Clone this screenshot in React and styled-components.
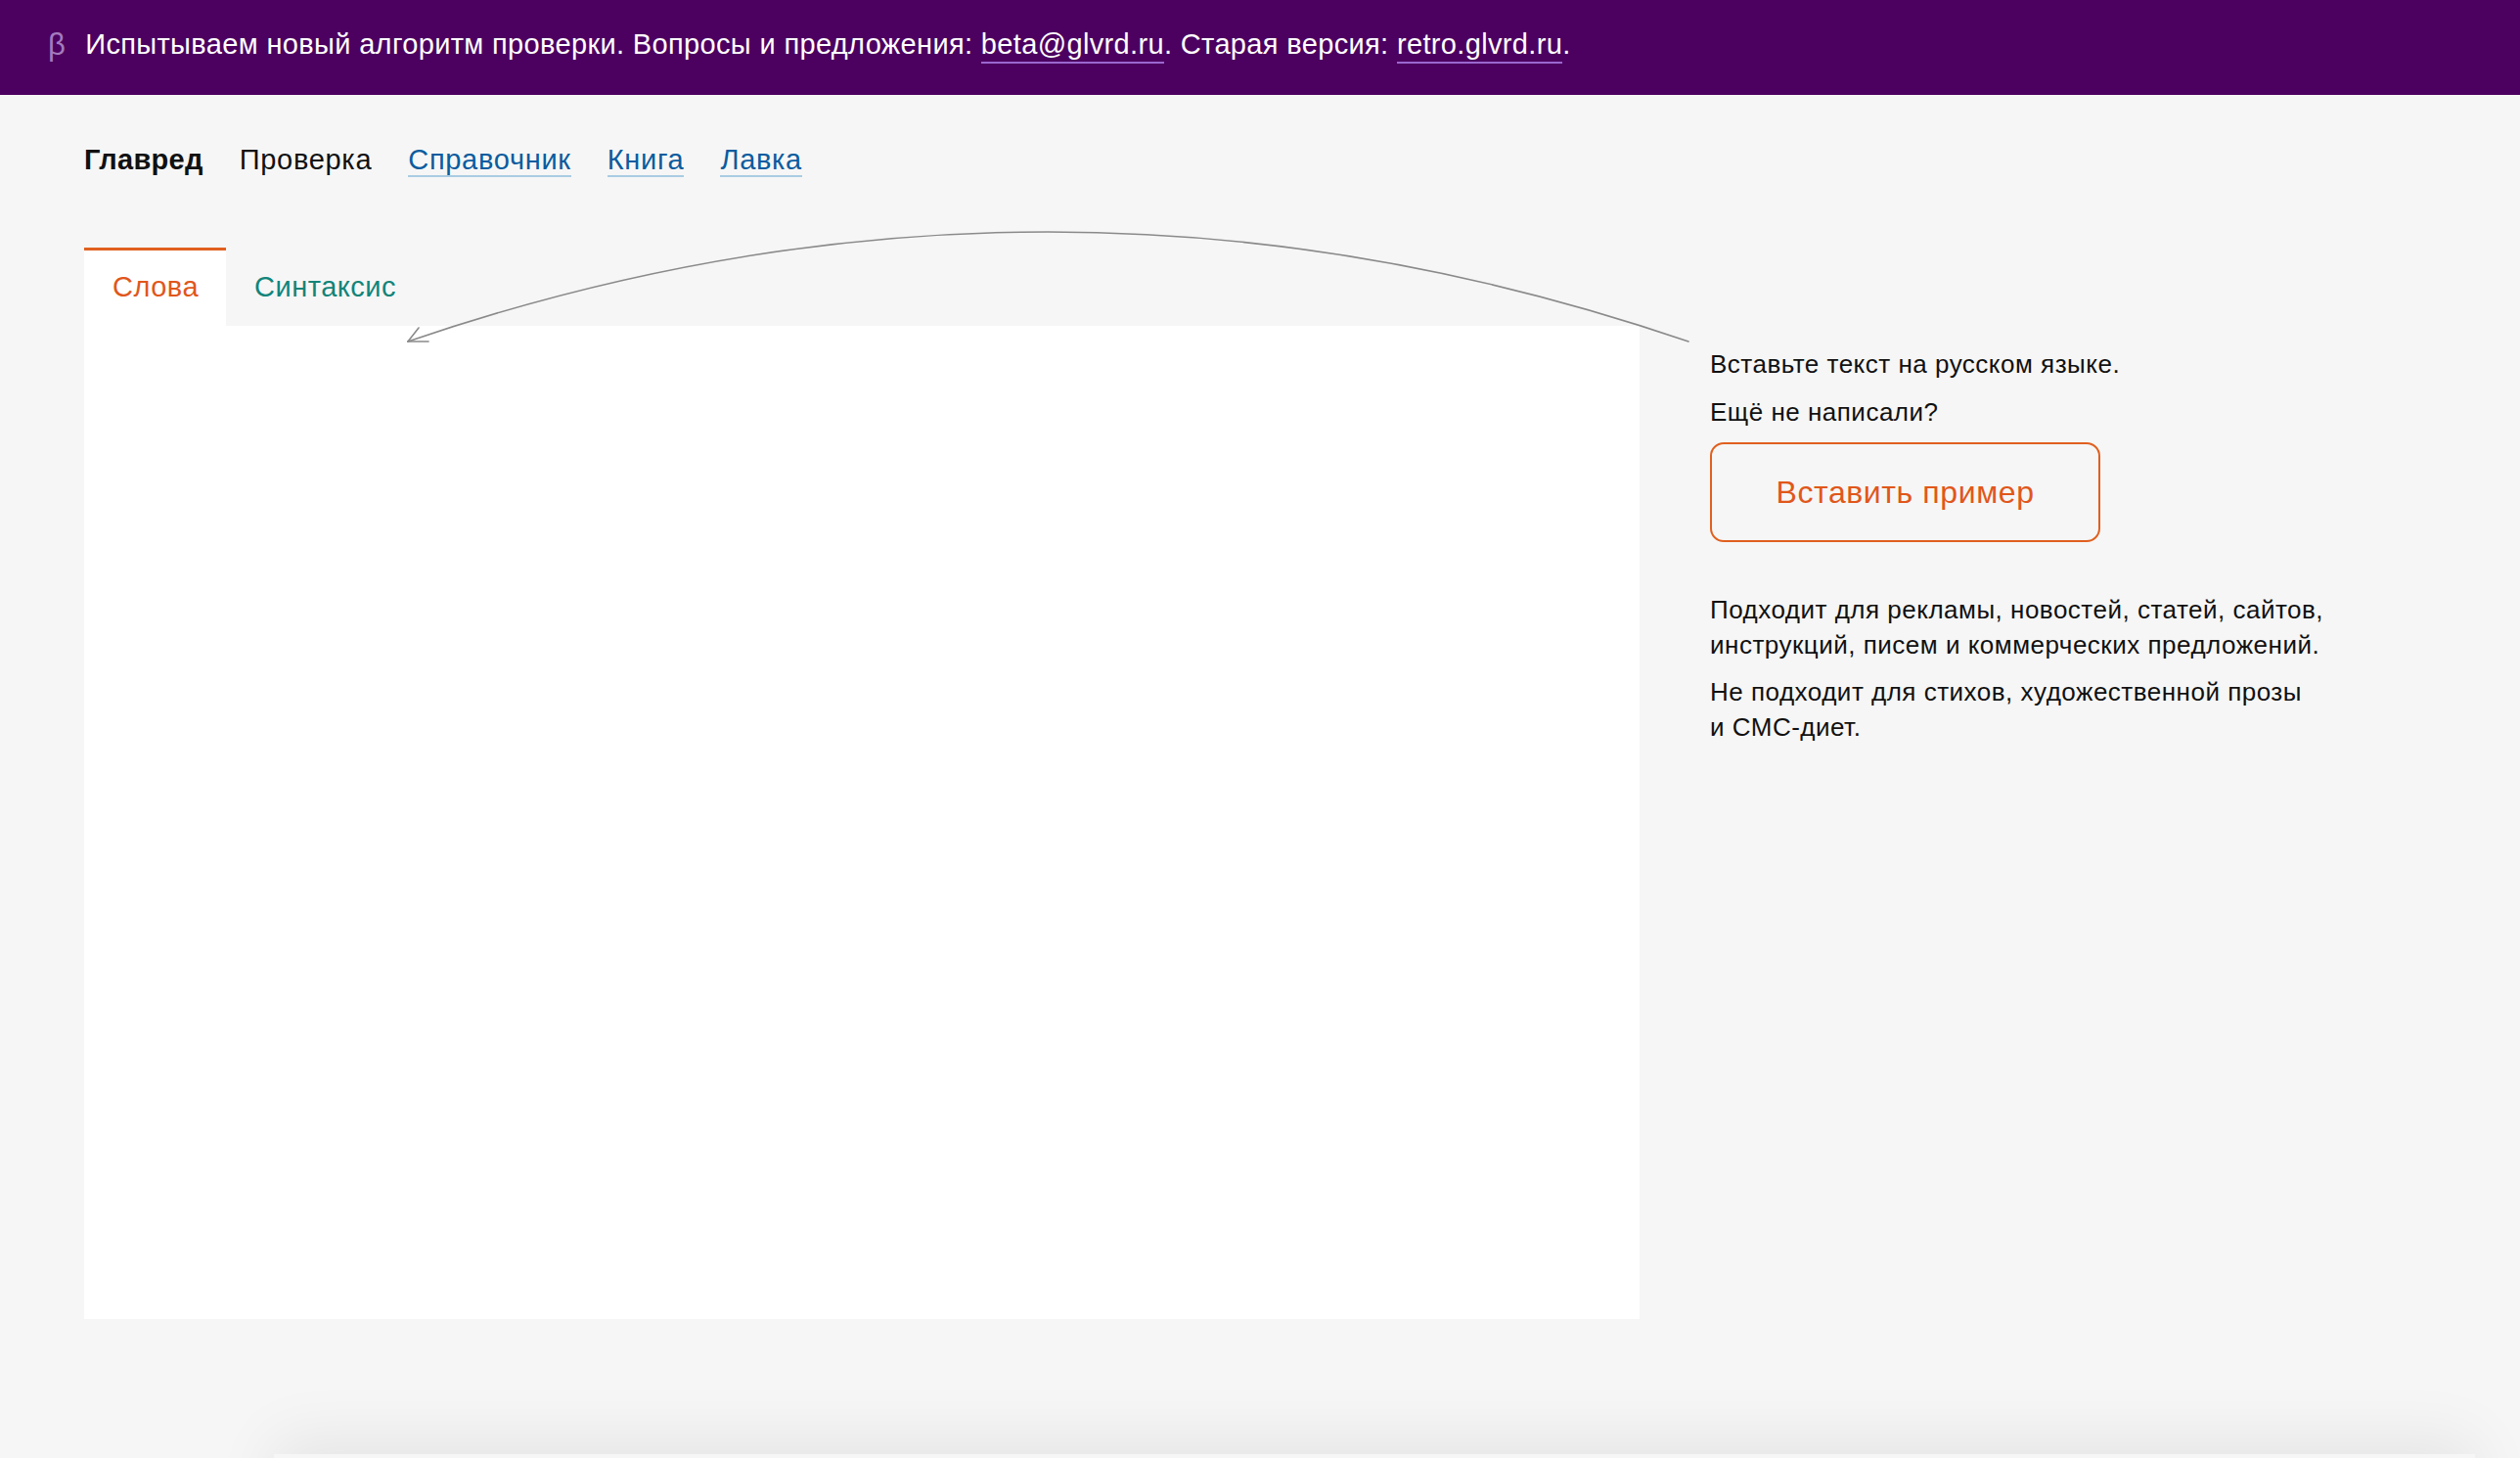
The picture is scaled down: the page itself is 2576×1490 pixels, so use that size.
import React from "react";
import styled, { createGlobalStyle } from "styled-components";

const GlobalStyle = createGlobalStyle`
  html, body {
    margin: 0;
    padding: 0;
    background: #f6f6f6;
  }
  body {
    font-family: "Liberation Sans", Arial, Helvetica, sans-serif;
    color: #111;
  }
  * {
    box-sizing: border-box;
  }
`;

const Page = styled.div`
  height: 1490px;
  overflow: hidden;
`;

const Banner = styled.div`
  height: 97px;
  background: #4c0060;
  color: #fff;
  display: flex;
  align-items: flex-start;
  padding-left: 49px;
  font-size: 29px;
  letter-spacing: 0.35px;
  line-height: 91px;
  white-space: nowrap;
`;

const Beta = styled.span`
  color: #a47bbd;
  font-size: 31px;
  margin-right: 20px;
`;

const BannerLink = styled.a`
  color: #fff;
  text-decoration: none;
  border-bottom: 2px solid #9a68cf;
  padding-bottom: 2px;
`;

const Content = styled.div`
  padding: 50px 0 0 86px;
  position: relative;
`;

const Nav = styled.nav`
  display: flex;
  align-items: flex-start;
  gap: 37px;
  height: 36px;
  font-size: 29px;
  line-height: 32px;
`;

const NavItem = styled.a`
  color: ${(p) => (p.$link ? "#0b5c9e" : "#111")};
  font-weight: ${(p) => (p.$bold ? 700 : 400)};
  letter-spacing: ${(p) => (p.$bold ? "0.3px" : "0.7px")};
  text-decoration: none;
  border-bottom: 2px solid ${(p) => (p.$link ? "#a9cce3" : "transparent")};
`;

const Workspace = styled.div`
  display: flex;
  gap: 72px;
  margin-top: 70px;
`;

const EditorColumn = styled.div`
  width: 1590px;
  flex-shrink: 0;
`;

const Tabs = styled.div`
  display: flex;
  height: 80px;
`;

const Tab = styled.div`
  padding: 17px 28px 20px 29px;
  font-size: 29px;
  letter-spacing: 0.5px;
  line-height: 40px;
  border-top: 3px solid ${(p) => (p.$active ? "#e0601f" : "transparent")};
  background: ${(p) => (p.$active ? "#fff" : "transparent")};
  color: ${(p) => (p.$active ? "#e0571a" : "#138479")};
  cursor: pointer;
`;

const Editor = styled.div`
  background: #fff;
  height: 1015px;
`;

const Aside = styled.aside`
  padding-top: 101px;
  font-size: 26px;
  letter-spacing: 0.5px;
  line-height: 36px;
  color: #111;
`;

const Note = styled.p`
  margin: 0 0 ${(p) => p.$after || 13}px;
`;

const ExampleButton = styled.button`
  display: block;
  width: 399px;
  height: 102px;
  border: 2px solid #e0601f;
  border-radius: 14px;
  background: transparent;
  color: #e0571a;
  font-family: "Liberation Sans", Arial, sans-serif;
  font-size: 32px;
  letter-spacing: 0.6px;
  cursor: pointer;
  margin: 0 0 51px;
`;

const Arrow = styled.svg`
  position: absolute;
  left: 0;
  top: -97px;
  pointer-events: none;
  overflow: visible;
`;

const Footer = styled.footer`
  display: flex;
  justify-content: flex-end;
  margin-top: 138px;
  padding-right: 46px;
`;

const FooterCard = styled.div`
  width: 2250px;
  height: 200px;
  box-shadow: 0 -14px 60px rgba(0, 0, 0, 0.075);
`;

export default function App() {
  return (
    <Page>
      <GlobalStyle />
      <Banner>
        <Beta>β</Beta>
        <span>
          Испытываем новый алгоритм проверки. Вопросы и предложения:{" "}
          <BannerLink href="#">beta@glvrd.ru</BannerLink>. Старая версия:{" "}
          <BannerLink href="#">retro.glvrd.ru</BannerLink>.
        </span>
      </Banner>

      <Content>
        <Nav>
          <NavItem $bold>Главред</NavItem>
          <NavItem>Проверка</NavItem>
          <NavItem $link href="#">Справочник</NavItem>
          <NavItem $link href="#">Книга</NavItem>
          <NavItem $link href="#">Лавка</NavItem>
        </Nav>

        <Workspace>
          <EditorColumn>
            <Tabs>
              <Tab $active>Слова</Tab>
              <Tab>Синтаксис</Tab>
            </Tabs>
            <Editor />
          </EditorColumn>

          <Aside>
            <Note>Вставьте текст на русском языке.</Note>
            <Note>Ещё не написали?</Note>
            <ExampleButton>Вставить пример</ExampleButton>
            <Note $after={12}>
              Подходит для рекламы, новостей, статей, сайтов,
              <br />
              инструкций, писем и коммерческих предложений.
            </Note>
            <Note>
              Не подходит для стихов, художественной прозы
              <br />и СМС-диет.
            </Note>
          </Aside>
        </Workspace>

        <Arrow width="2576" height="400" viewBox="0 0 2576 400">
          <g fill="none" stroke="#8a8a8a" strokeWidth="1.6" strokeLinecap="round">
            <path d="M1726 349 Q1071 125 417 349" />
            <path d="M417 349 L428 335" />
            <path d="M417 349 L438 349" />
          </g>
        </Arrow>
      </Content>

      <Footer>
        <FooterCard />
      </Footer>
    </Page>
  );
}
